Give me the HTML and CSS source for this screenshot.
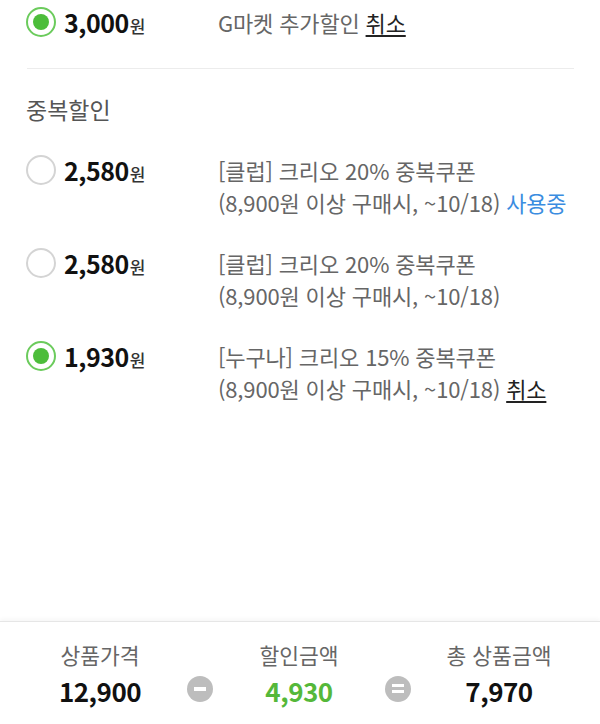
FILE: index.html
```html
<!DOCTYPE html>
<html lang="ko">
<head>
  <meta charset="UTF-8">
  <meta name="viewport" content="width=device-width, initial-scale=1.0">
  <title>할인 선택</title>
  <link rel="stylesheet" href="styles.css">
</head>
<body>

  <div class="page">
    <div class="content">
      <!-- 추가할인 -->
      <div class="row first">
        <span class="radio checked"></span>
        <div class="amount">3,000<span class="won">원</span></div>
        <div class="desc">
          <div>G마켓 추가할인 <a class="cancel" href="#">취소</a></div>
        </div>
      </div>

      <div class="divider"></div>

      <!-- 중복할인 -->
      <div class="section-title">중복할인</div>

      <div class="row">
        <span class="radio"></span>
        <div class="amount">2,580<span class="won">원</span></div>
        <div class="desc">
          <div>[클럽] 크리오 20% 중복쿠폰</div>
          <div>(8,900원 이상 구매시, ~10/18) <span class="in-use">사용중</span></div>
        </div>
      </div>

      <div class="row">
        <span class="radio"></span>
        <div class="amount">2,580<span class="won">원</span></div>
        <div class="desc">
          <div>[클럽] 크리오 20% 중복쿠폰</div>
          <div>(8,900원 이상 구매시, ~10/18)</div>
        </div>
      </div>

      <div class="row">
        <span class="radio checked"></span>
        <div class="amount">1,930<span class="won">원</span></div>
        <div class="desc">
          <div>[누구나] 크리오 15% 중복쿠폰</div>
          <div>(8,900원 이상 구매시, ~10/18) <a class="cancel" href="#">취소</a></div>
        </div>
      </div>
    </div>

    <div class="summary">
      <div class="sum-col">
        <div class="sum-label">상품가격</div>
        <div class="sum-value">12,900</div>
      </div>
      <div class="sum-col op minus">
        <div class="sum-label">할인금액</div>
        <div class="sum-value green">4,930</div>
      </div>
      <div class="sum-col op equals">
        <div class="sum-label">총 상품금액</div>
        <div class="sum-value">7,970</div>
      </div>
    </div>
  </div>

</body>
</html>
```

FILE: styles.css
```css
* {
  box-sizing: border-box;
  font-family: "Noto Sans CJK KR", "Noto Sans", sans-serif;
}

body {
  margin: 0;
  background: #fff;
}

.page {
  height: 724px;
  display: flex;
  flex-direction: column;
}

.content {
  padding: 6px 26px 0 26px;
  flex: 1;
}

.row {
  display: flex;
  align-items: flex-start;
  margin-bottom: 29px;
}

.row.first {
  margin-bottom: 0;
}

.radio {
  width: 30px;
  height: 30px;
  margin-top: 1px;
  border: 2px solid #d4d4d4;
  border-radius: 50%;
  display: flex;
  align-items: center;
  justify-content: center;
  flex-shrink: 0;
}

.radio.checked {
  border-color: #6bcb5c;
}

.radio.checked::after {
  content: "";
  width: 16px;
  height: 16px;
  border-radius: 50%;
  background: #4cbd3a;
}

.amount {
  width: 162px;
  padding-left: 8px;
  font-size: 25px;
  font-weight: 700;
  line-height: 32px;
  color: #111;
  letter-spacing: -0.5px;
}

.won {
  font-size: 17px;
  font-weight: 500;
  color: #333;
  margin-left: 1px;
  letter-spacing: 0;
}

.desc {
  font-size: 22px;
  line-height: 32px;
  color: #666;
  letter-spacing: -0.15px;
}

.cancel {
  color: #222;
  text-decoration: underline;
  text-underline-offset: 3px;
}

.in-use {
  color: #3b8de0;
}

.divider {
  height: 1px;
  background: #ececec;
  margin: 26px 0 24px 1px;
}

.section-title {
  font-size: 23px;
  line-height: 32px;
  color: #555;
  margin-bottom: 29px;
}

.summary {
  height: 103px;
  border-top: 1px solid #e6e6e6;
  box-shadow: 0 -2px 4px rgba(0, 0, 0, 0.04);
  display: grid;
  grid-template-columns: 200px 198px 202px;
  padding-top: 17px;
}

.sum-col {
  position: relative;
  text-align: center;
}

.sum-label {
  font-size: 21.5px;
  line-height: 32px;
  color: #666;
}

.sum-value {
  font-size: 26px;
  font-weight: 700;
  line-height: 40px;
  color: #111;
  letter-spacing: -0.5px;
}

.sum-value.green {
  color: #55b83a;
}

/* operator badges sit on the column boundary */
.op::before {
  content: "";
  position: absolute;
  left: -13px;
  top: 37px;
  width: 26px;
  height: 26px;
  border-radius: 50%;
  background: #bdbdbd;
}

.op::after {
  content: "";
  position: absolute;
  left: -6px;
  top: 48px;
  width: 12px;
  height: 4px;
  background: #fff;
}

.equals::after {
  top: 45px;
  height: 3px;
  box-shadow: 0 6px 0 #fff;
}
```
